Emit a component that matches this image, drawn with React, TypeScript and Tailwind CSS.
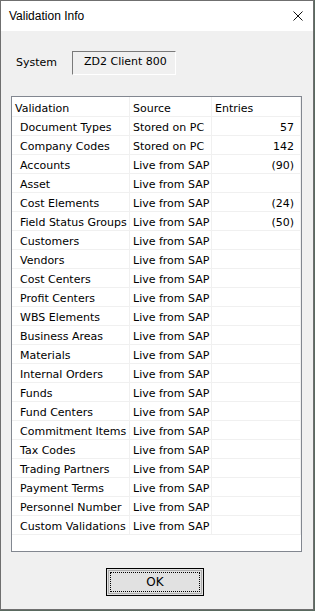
const rows: [string, string, string][] = [
  ["Document Types", "Stored on PC", "57"],
  ["Company Codes", "Stored on PC", "142"],
  ["Accounts", "Live from SAP", "(90)"],
  ["Asset", "Live from SAP", ""],
  ["Cost Elements", "Live from SAP", "(24)"],
  ["Field Status Groups", "Live from SAP", "(50)"],
  ["Customers", "Live from SAP", ""],
  ["Vendors", "Live from SAP", ""],
  ["Cost Centers", "Live from SAP", ""],
  ["Profit Centers", "Live from SAP", ""],
  ["WBS Elements", "Live from SAP", ""],
  ["Business Areas", "Live from SAP", ""],
  ["Materials", "Live from SAP", ""],
  ["Internal Orders", "Live from SAP", ""],
  ["Funds", "Live from SAP", ""],
  ["Fund Centers", "Live from SAP", ""],
  ["Commitment Items", "Live from SAP", ""],
  ["Tax Codes", "Live from SAP", ""],
  ["Trading Partners", "Live from SAP", ""],
  ["Payment Terms", "Live from SAP", ""],
  ["Personnel Number", "Live from SAP", ""],
  ["Custom Validations", "Live from SAP", ""],
];

const font = { fontFamily: "Tahoma, 'DejaVu Sans', sans-serif" };

export default function App() {
  return (
    <div className="w-[315px] h-[611px] bg-[#5a6a60]">
      <div
        className="w-[314px] h-[610px] border border-[#6f6f6f] bg-[#f0f0f0] flex flex-col text-[11px] text-black"
        style={font}
      >
        {/* title bar */}
        <div className="h-[30px] bg-white flex items-center justify-between pl-[8px] pr-[9px] shrink-0">
          <span className="text-[12px] font-['Liberation_Sans',sans-serif]">Validation Info</span>
          <svg width="10" height="10" viewBox="0 0 10 10" className="mr-[1px]">
            <path d="M0.5 0.5 L9.5 9.5 M9.5 0.5 L0.5 9.5" stroke="#111" strokeWidth="1" />
          </svg>
        </div>

        {/* system */}
        <div className="flex items-center mt-[20px] ml-[15px] h-[24px]">
          <span className="w-[56px] pt-[1px]">System</span>
          <div className="w-[104px] h-[24px] border border-t-[#7a7a7a] border-l-[#7a7a7a] border-b-white border-r-white flex items-center pl-[11px] pb-[1px]">
            ZD2 Client 800
          </div>
        </div>

        {/* list */}
        <div className="ml-[10px] mt-[21px] w-[291px] h-[456px] border border-[#828790] bg-white">
          <div className="flex h-[20px] border-b border-[#f0f0f0]">
            <div className="w-[118px] pl-[3px] pt-[4px] border-r border-[#f0f0f0]">Validation</div>
            <div className="w-[82px] pl-[3px] pt-[4px] border-r border-[#f0f0f0]">Source</div>
            <div className="w-[89px] pl-[3px] pt-[4px] border-r border-[#f0f0f0]">Entries</div>
          </div>
          {rows.map(([name, src, n]) => (
            <div key={name} className="flex h-[19px] border-b border-[#f0f0f0]">
              <div className="w-[118px] pl-[8px] pt-[3px] border-r border-[#f0f0f0] whitespace-nowrap overflow-hidden">
                {name}
              </div>
              <div className="w-[82px] pl-[3px] pt-[3px] border-r border-[#f0f0f0] whitespace-nowrap">{src}</div>
              <div className="w-[89px] pr-[6px] pt-[3px] text-right border-r border-[#f0f0f0]">{n}</div>
            </div>
          ))}
        </div>

        {/* button */}
        <div className="flex justify-center mt-[16px] pr-[4px]">
          <button className="w-[98px] h-[28px] border border-black bg-[#e1e1e1] p-[1px]">
            <div className="w-full h-full border border-[#adadad] p-[1px]">
              <div className="w-full h-full border border-dotted border-black flex items-center justify-center text-[12px]">
                OK
              </div>
            </div>
          </button>
        </div>
      </div>
    </div>
  );
}
